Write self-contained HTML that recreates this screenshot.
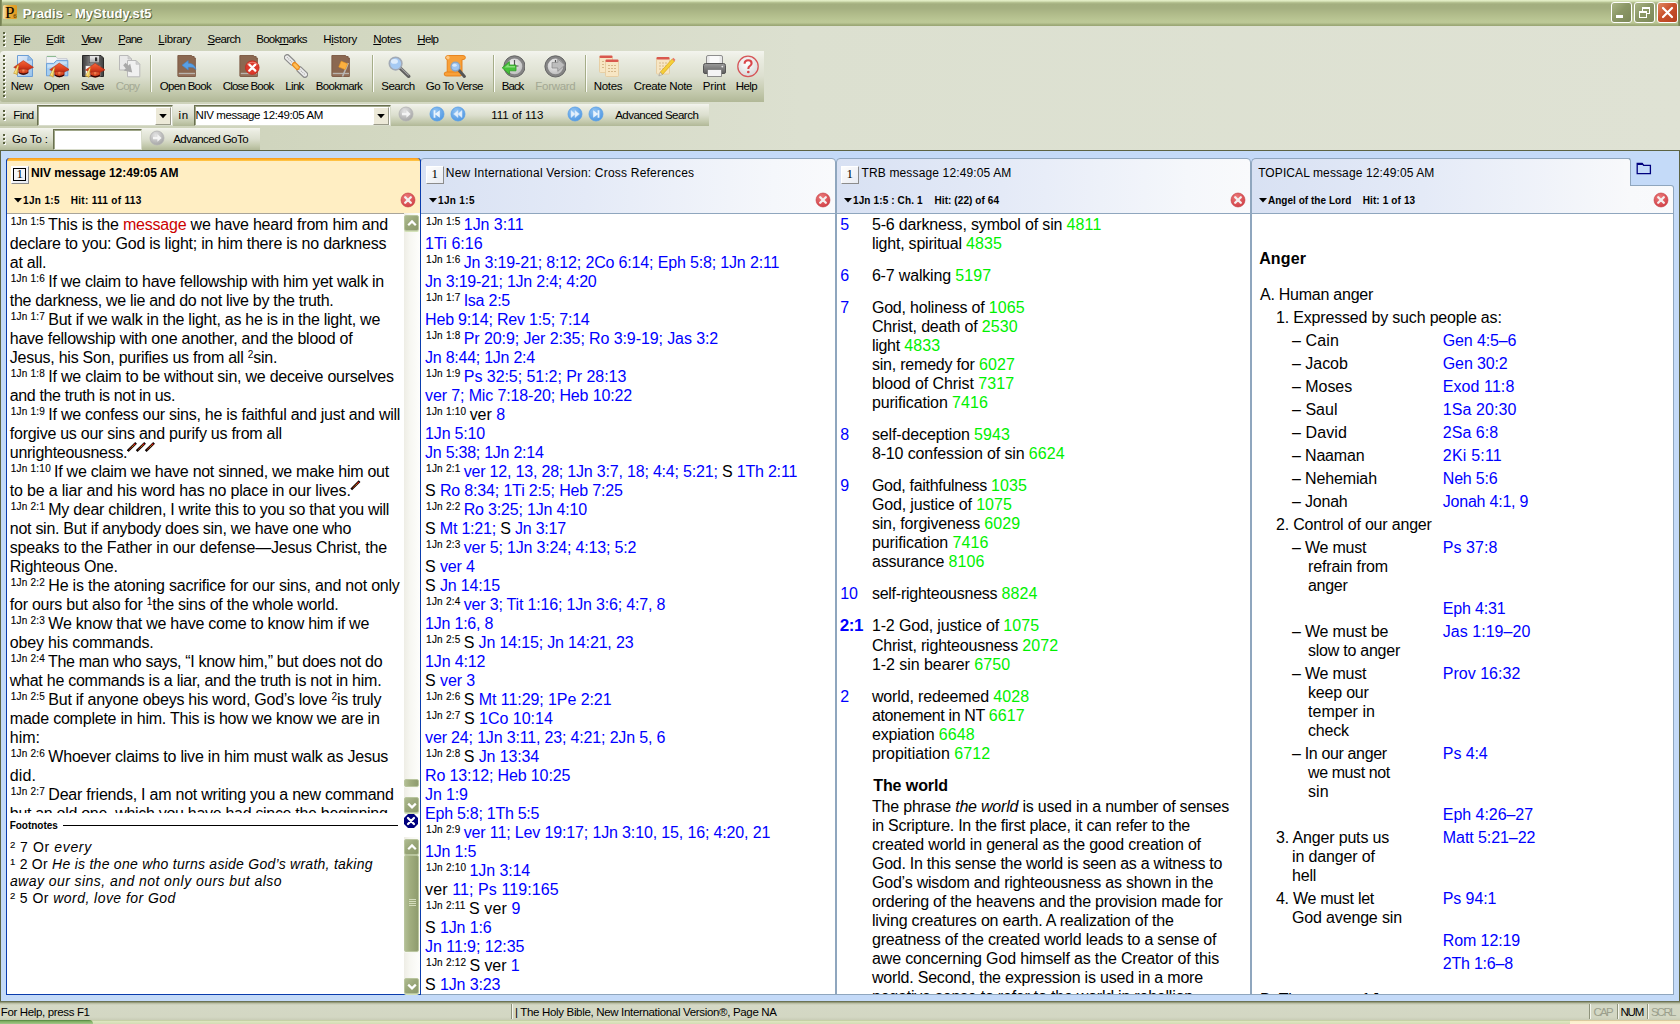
<!DOCTYPE html>
<html lang="en"><head><meta charset="utf-8"><title>Pradis - MyStudy.st5</title>
<style>
html,body{margin:0;padding:0}
body{width:1680px;height:1024px;overflow:hidden;position:relative;background:#dde1d1;font-family:"Liberation Sans",sans-serif;font-size:11px;color:#000}
div,span,svg{box-sizing:border-box}
.abs{position:absolute}
/* title bar */
#title{position:absolute;left:0;top:0;width:1680px;height:26px;
 background:linear-gradient(to bottom,#e6f0ca 0,#dbe7bd 1px,#b6c292 2.5px,#a3ae7f 4px,#a4af80 8px,#b0bb8a 14px,#bcc896 21px,#bbc795 23px,#a9b583 24px,#98a472 26px)}
#title .edgeL{position:absolute;left:0;top:0;width:2px;height:26px;background:linear-gradient(to right,#6f7a4d,#8e9a69)}
#title .edgeR{position:absolute;right:0;top:0;width:2px;height:26px;background:linear-gradient(to left,#6f7a4d,#8e9a69)}
.wbtn{position:absolute;top:2px;width:21px;height:21px;border:1px solid #fff;border-radius:3px;
 background:linear-gradient(135deg,#aab586 0,#8b9766 45%,#7c8858 100%)}
.wbtn.close{background:linear-gradient(135deg,#e08a62 0,#c9512c 45%,#b5401f 100%)}
/* dock area */
#dock{position:absolute;left:0;top:26px;width:1680px;height:124px;
 background:linear-gradient(to right,#cacfb6 0,#d3d8c2 400px,#dce0d0 800px,#dfe2d4 1680px)}
.tb{position:absolute;
 background:linear-gradient(to bottom,#f3f4ee 0,#eaece1 15%,#dcdfcf 50%,#c4caae 80%,#b1b897 100%)}
.grip{position:absolute;left:3px;width:2px;background:
 repeating-linear-gradient(to bottom,#59613e 0,#59613e 2px,transparent 2px,transparent 4px)}
.gripw{position:absolute;left:4px;width:2px;background:
 repeating-linear-gradient(to bottom,#fdfdfb 0,#fdfdfb 2px,transparent 2px,transparent 4px)}
.sep{position:absolute;width:2px;background:linear-gradient(to right,#a5ad88 0,#a5ad88 1px,#fbfcf8 1px,#fbfcf8 2px)}
.inp{position:absolute;background:#fff;border:1px solid;border-color:#6a7050 #d8dccb #d8dccb #6a7050;box-shadow:inset 1px 1px 0 #a0a78a}
.ddb{position:absolute;background:#ece9d8;border:1px solid;border-color:#fff #9a9a8a #9a9a8a #fff}
/* workspace */
#work{position:absolute;left:0;top:150px;width:1680px;height:852px;background:#c4daf8;border:1px solid #5c6343;border-bottom:0}
.pane{position:absolute;background:#fff;overflow:hidden}
.txt{position:absolute;white-space:pre;font-size:16px;line-height:19px;height:19px;letter-spacing:-0.2px;word-spacing:0;color:#000}
.v{font-size:10px;letter-spacing:0.22px;word-spacing:0;position:relative;top:-5px;left:1px;color:#000;-webkit-text-stroke:0.12px #000}
.b{color:#0000ff}
.g{color:#00f000}
.gx{letter-spacing:0.1px}
.r{color:#cc0000}
.k{color:#000}
.sup{font-size:10px;position:relative;top:-5px;letter-spacing:0}
/* scrollbar bits */
.sbtrack{position:absolute;width:16px;background:linear-gradient(to right,#eeede5 0,#f7f7f2 40%,#fefefc 100%)}
.sbbtn{position:absolute;width:15px;height:16px;border:1px solid #b9c59e;border-radius:2px;
 background:linear-gradient(135deg,#aebb90 0,#9aa77a 45%,#8b996a 100%);box-shadow:0 1px 0 0 #d3e2b8}
.sbthumb{position:absolute;width:15px;border:1px solid #b9c59e;border-radius:2px;
 background:linear-gradient(to right,#b2be94 0,#a0ad7e 40%,#8f9c6e 100%);box-shadow:0 1px 0 0 #f6f7f1}
/* status */
#status{position:absolute;left:0;top:1001px;width:1680px;height:19px;
 background:linear-gradient(to bottom,#5b6244 0,#7d8465 1px,#adb296 2px,#c9cdb7 3px,#d4d8c5 4.5px,#d3d7c3 16px,#c8ccb6 19px)}
#task{position:absolute;left:0;top:1020px;width:1680px;height:4px;background:linear-gradient(to bottom,#aebb8a 0,#dfe7c2 1px,#d3dcb3 4px)}
.fn{position:absolute;white-space:pre;font-size:14px;line-height:17px;height:17px;letter-spacing:-0.1px;color:#000}
.fs{font-size:9.5px;position:relative;top:-4px;letter-spacing:0.3px;-webkit-text-stroke:0.12px #000}

</style></head>
<body>
<div id="title"><div class="edgeL"></div><div class="edgeR"></div>
<svg class="abs" style="left:3px;top:5px" width="14" height="14" viewBox="0 0 14 14"><defs><linearGradient id="gp6" x1="0" y1="0" x2="1" y2="0"><stop offset="0" stop-color="#f8e3b0"/><stop offset=".35" stop-color="#e7ae3c"/><stop offset="1" stop-color="#e09a22"/></linearGradient></defs><rect x="0" y="0" width="14" height="14" rx="1.5" fill="url(#gp6)"/><text x="2.0" y="12.8" font-family="Liberation Serif" font-size="17" fill="#0c0600">P</text><text x="10.2" y="13.2" font-family="Liberation Serif" font-size="6.5" fill="#3a2a08">6</text></svg>
<span style="position:absolute;left:22.73px;top:5.10px;font:normal bold 13px 'Liberation Sans';line-height:17px;letter-spacing:0.101px;color:#fff;white-space:pre;text-shadow:1px 1px 0 #5d673f,1px 0 0 rgba(93,103,63,.55)">Pradis - MyStudy.st5</span>
<div class="wbtn" style="left:1611px"><div class="abs" style="left:4px;top:12px;width:7px;height:3px;background:#fff"></div></div>
<div class="wbtn" style="left:1634px"><div class="abs" style="left:7px;top:4px;width:8px;height:7px;border:1px solid #fff;border-top-width:2px"></div><div class="abs" style="left:4px;top:8px;width:8px;height:7px;border:1px solid #fff;border-top-width:2px;background:#8a9665"></div></div>
<div class="wbtn close" style="left:1657px"><svg class="abs" style="left:0px;top:0px" width="19" height="19" viewBox="0 0 19 19"><path d="M5 5 L14 14 M14 5 L5 14" stroke="#fff" stroke-width="2.2" stroke-linecap="round"/></svg></div>
</div>
<div id="dock"></div>
<div class="gripw" style="top:33px;height:14px"></div><div class="grip" style="top:32px;height:14px"></div>
<span style="position:absolute;left:13.86px;top:31.52px;font:normal normal 11.5px 'Liberation Sans';line-height:15px;letter-spacing:-0.559px;color:#000;white-space:pre;"><u>F</u>ile</span>
<span style="position:absolute;left:46.16px;top:31.52px;font:normal normal 11.5px 'Liberation Sans';line-height:15px;letter-spacing:-0.400px;color:#000;white-space:pre;"><u>E</u>dit</span>
<span style="position:absolute;left:81.45px;top:31.52px;font:normal normal 11.5px 'Liberation Sans';line-height:15px;letter-spacing:-1.332px;color:#000;white-space:pre;"><u>V</u>iew</span>
<span style="position:absolute;left:118.26px;top:31.52px;font:normal normal 11.5px 'Liberation Sans';line-height:15px;letter-spacing:-0.802px;color:#000;white-space:pre;"><u>P</u>ane</span>
<span style="position:absolute;left:158.36px;top:31.52px;font:normal normal 11.5px 'Liberation Sans';line-height:15px;letter-spacing:-0.332px;color:#000;white-space:pre;"><u>L</u>ibrary</span>
<span style="position:absolute;left:207.58px;top:31.52px;font:normal normal 11.5px 'Liberation Sans';line-height:15px;letter-spacing:-0.614px;color:#000;white-space:pre;"><u>S</u>earch</span>
<span style="position:absolute;left:256.26px;top:31.52px;font:normal normal 11.5px 'Liberation Sans';line-height:15px;letter-spacing:-0.772px;color:#000;white-space:pre;">Book<u>m</u>arks</span>
<span style="position:absolute;left:323.26px;top:31.52px;font:normal normal 11.5px 'Liberation Sans';line-height:15px;letter-spacing:-0.319px;color:#000;white-space:pre;">H<u>i</u>story</span>
<span style="position:absolute;left:373.26px;top:31.52px;font:normal normal 11.5px 'Liberation Sans';line-height:15px;letter-spacing:-0.447px;color:#000;white-space:pre;"><u>N</u>otes</span>
<span style="position:absolute;left:417.26px;top:31.52px;font:normal normal 11.5px 'Liberation Sans';line-height:15px;letter-spacing:-0.643px;color:#000;white-space:pre;"><u>H</u>elp</span>
<div class="tb" style="left:0;top:51px;width:764px;height:51px;border-radius:4px 0 0 3px"></div>
<div class="gripw" style="top:56px;height:42px"></div><div class="grip" style="top:55px;height:42px"></div>
<svg class="abs" style="left:12px;top:54px" width="24" height="24" viewBox="0 0 24 24"><defs><linearGradient id="gdoc" x1="0" y1="0" x2="1" y2="1"><stop offset="0" stop-color="#e6edf8"/><stop offset=".5" stop-color="#c2daf3"/><stop offset="1" stop-color="#93c0ea"/></linearGradient></defs><path d="M5.5 1.5 H16.2 L20.5 5.8 V22.5 H5.5 Z" fill="url(#gdoc)" stroke="#6c9ed6"/><path d="M16.2 1.5 L15.6 6.4 L20.5 5.8 Z" fill="#9cc0e6" stroke="#6c9ed6" stroke-width=".6"/><g transform="translate(1.3 6.6) scale(1)"><defs><linearGradient id="gcapR" x1="0" y1="0" x2="0" y2="1"><stop offset="0" stop-color="#f4683a"/><stop offset=".6" stop-color="#dd4220"/><stop offset="1" stop-color="#b62a14"/></linearGradient><radialGradient id="gcapS" cx=".5" cy=".3" r=".65"><stop offset="0" stop-color="#f58a56"/><stop offset=".6" stop-color="#d8441f"/><stop offset="1" stop-color="#ae2610"/></radialGradient></defs><path d="M5.4 8 L5.4 12.2 Q10 15.8 14.9 12.2 L14.9 8 Z" fill="url(#gcapS)" stroke="#9a200c" stroke-width=".5"/><path d="M5.5 11.6 Q10 14.4 14.8 11.6 L14.8 12.5 Q10 16 5.5 12.5Z" fill="#240403"/><path d="M8.3 9 V12.6 M11.8 9 V12.8" stroke="#a8260f" stroke-width=".6" opacity=".7"/><path d="M10 0 L20.2 6.7 L15 9.1 Q10 7.2 5.2 9.1 L0.4 6.7 Z" fill="url(#gcapR)" stroke="#a82612" stroke-width=".5"/><path d="M4.8 4.2 L0.4 12.8 L1.8 12.9 L3.9 14.2 L5.3 4.5 Z" fill="#f1d25a" stroke="#c48a18" stroke-width=".55"/><path d="M4.7 5.5 L1.6 12.4" stroke="#fbeeb0" stroke-width=".7"/></g></svg>
<span style="position:absolute;left:10.86px;top:78.92px;font:normal normal 11.5px 'Liberation Sans';line-height:15px;letter-spacing:-0.550px;color:#000;white-space:pre;">New</span>
<svg class="abs" style="left:45px;top:54px" width="24" height="24" viewBox="0 0 24 24"><path d="M1.5 21 V2.6 H11 L12.6 4.6 H22 V8" fill="#f3f4f6" stroke="#c9ccd2"/><path d="M2 2.4 H11" stroke="#86b88a" stroke-width="1"/><path d="M1.5 21.8 V9.4 H8.6 L11.6 6.4 H22.8 V21.8 Z" fill="#a5cdf0" stroke="#6ea2da"/><path d="M2.4 10.4 H9 L12 7.4 H21.8 V10 L2.4 14Z" fill="#cfe5f8" opacity=".8"/><g transform="translate(4.3 9) scale(1)"><defs><linearGradient id="gcapR" x1="0" y1="0" x2="0" y2="1"><stop offset="0" stop-color="#f4683a"/><stop offset=".6" stop-color="#dd4220"/><stop offset="1" stop-color="#b62a14"/></linearGradient><radialGradient id="gcapS" cx=".5" cy=".3" r=".65"><stop offset="0" stop-color="#f58a56"/><stop offset=".6" stop-color="#d8441f"/><stop offset="1" stop-color="#ae2610"/></radialGradient></defs><path d="M5.4 8 L5.4 12.2 Q10 15.8 14.9 12.2 L14.9 8 Z" fill="url(#gcapS)" stroke="#9a200c" stroke-width=".5"/><path d="M5.5 11.6 Q10 14.4 14.8 11.6 L14.8 12.5 Q10 16 5.5 12.5Z" fill="#240403"/><path d="M8.3 9 V12.6 M11.8 9 V12.8" stroke="#a8260f" stroke-width=".6" opacity=".7"/><path d="M10 0 L20.2 6.7 L15 9.1 Q10 7.2 5.2 9.1 L0.4 6.7 Z" fill="url(#gcapR)" stroke="#a82612" stroke-width=".5"/><path d="M4.8 4.2 L0.4 12.8 L1.8 12.9 L3.9 14.2 L5.3 4.5 Z" fill="#f1d25a" stroke="#c48a18" stroke-width=".55"/><path d="M4.7 5.5 L1.6 12.4" stroke="#fbeeb0" stroke-width=".7"/></g></svg>
<span style="position:absolute;left:43.76px;top:78.92px;font:normal normal 11.5px 'Liberation Sans';line-height:15px;letter-spacing:-0.783px;color:#000;white-space:pre;">Open</span>
<svg class="abs" style="left:81px;top:54px" width="24" height="24" viewBox="0 0 24 24"><defs><linearGradient id="gfl" x1="0" y1="0" x2="1" y2="0"><stop offset="0" stop-color="#3c3c3c"/><stop offset=".45" stop-color="#8e8e8e"/><stop offset="1" stop-color="#404040"/></linearGradient><linearGradient id="gsh" x1="0" y1="0" x2="0" y2="1"><stop offset="0" stop-color="#f4f4f4"/><stop offset="1" stop-color="#a8a8a8"/></linearGradient></defs><path d="M1.5 1.5 H20 L22.5 4 V22.5 H1.5 Z" fill="url(#gfl)" stroke="#2a2a2a"/><rect x="8.6" y="1.8" width="9.6" height="7" fill="url(#gsh)" stroke="#4a4a4a" stroke-width=".5"/><rect x="14" y="3.4" width="2.2" height="3.8" fill="#2c2c2c"/><rect x="4.4" y="11.8" width="15" height="10.6" fill="#f8f8f8" stroke="#5a5a5a" stroke-width=".5"/><g transform="translate(4.1 9.25) scale(1)"><defs><linearGradient id="gcapR" x1="0" y1="0" x2="0" y2="1"><stop offset="0" stop-color="#f4683a"/><stop offset=".6" stop-color="#dd4220"/><stop offset="1" stop-color="#b62a14"/></linearGradient><radialGradient id="gcapS" cx=".5" cy=".3" r=".65"><stop offset="0" stop-color="#f58a56"/><stop offset=".6" stop-color="#d8441f"/><stop offset="1" stop-color="#ae2610"/></radialGradient></defs><path d="M5.4 8 L5.4 12.2 Q10 15.8 14.9 12.2 L14.9 8 Z" fill="url(#gcapS)" stroke="#9a200c" stroke-width=".5"/><path d="M5.5 11.6 Q10 14.4 14.8 11.6 L14.8 12.5 Q10 16 5.5 12.5Z" fill="#240403"/><path d="M8.3 9 V12.6 M11.8 9 V12.8" stroke="#a8260f" stroke-width=".6" opacity=".7"/><path d="M10 0 L20.2 6.7 L15 9.1 Q10 7.2 5.2 9.1 L0.4 6.7 Z" fill="url(#gcapR)" stroke="#a82612" stroke-width=".5"/><path d="M4.8 4.2 L0.4 12.8 L1.8 12.9 L3.9 14.2 L5.3 4.5 Z" fill="#f1d25a" stroke="#c48a18" stroke-width=".55"/><path d="M4.7 5.5 L1.6 12.4" stroke="#fbeeb0" stroke-width=".7"/></g></svg>
<span style="position:absolute;left:80.78px;top:78.92px;font:normal normal 11.5px 'Liberation Sans';line-height:15px;letter-spacing:-0.895px;color:#000;white-space:pre;">Save</span>
<svg class="abs" style="left:117px;top:54px" width="24" height="24" viewBox="0 0 24 24"><path d="M2.5 1.5 H11 L14.5 5 V16 H2.5 Z" fill="#e9e9e9" stroke="#b9b9b9"/><path d="M11 1.5 V5 H14.5Z" fill="#d2d2d2" stroke="#b9b9b9" stroke-width=".6"/><path d="M10.5 6.5 H19 L22.8 10.3 V22.8 H10.5 Z" fill="#f0f0f0" stroke="#b9b9b9"/><path d="M19 6.5 V10.3 H22.8Z" fill="#d2d2d2" stroke="#b9b9b9" stroke-width=".6"/><path d="M6.2 11.2 L8.6 8.8 L11.4 11.6 L13.2 9.8 L15.2 18.6 L6.6 16.6 L8.8 14.4 Z" fill="#a9a9a9"/></svg>
<span style="position:absolute;left:115.72px;top:78.92px;font:normal normal 11.5px 'Liberation Sans';line-height:15px;letter-spacing:-0.818px;color:#a3a894;white-space:pre;">Copy</span>
<svg class="abs" style="left:173px;top:54px" width="24" height="24" viewBox="0 0 24 24"><g transform="translate(3 0) scale(1.25 1)"><path d="M1.5 1.5 H12.5 V2.5 H14.5 V4 H15.5 V22.5 H2 Q1.5 22.5 1.5 22 Z" fill="#8b6851" stroke="#7a5742" stroke-width=".8"/><rect x="2.2" y="18.8" width="13" height="1.6" fill="#b9b4ae"/><rect x="2.2" y="20.4" width="13" height="1.6" fill="#94705a"/></g><path d="M9 11.2 L15.2 6.5 L15.2 9.2 Q21.5 9.2 23 15.5 Q20.5 12.6 15.2 13.2 L15.2 16 Z" fill="#58a0e6" stroke="#3f86cf" stroke-width=".6"/></svg>
<span style="position:absolute;left:159.76px;top:78.92px;font:normal normal 11.5px 'Liberation Sans';line-height:15px;letter-spacing:-0.690px;color:#000;white-space:pre;">Open Book</span>
<svg class="abs" style="left:236px;top:54px" width="24" height="24" viewBox="0 0 24 24"><g transform="translate(2 0) scale(1.25 1)"><path d="M1.5 1.5 H12.5 V2.5 H14.5 V4 H15.5 V22.5 H2 Q1.5 22.5 1.5 22 Z" fill="#8b6851" stroke="#7a5742" stroke-width=".8"/><rect x="2.2" y="18.8" width="13" height="1.6" fill="#b9b4ae"/><rect x="2.2" y="20.4" width="13" height="1.6" fill="#94705a"/></g><circle cx="16.3" cy="13.6" r="6.8" fill="#dd3a2c" stroke="#c02a1c" stroke-width=".8"/><path d="M13.3 10.6 L19.3 16.6 M19.3 10.6 L13.3 16.6" stroke="#fff" stroke-width="2.2" stroke-linecap="round"/><path d="M11 10.5 Q16.3 6 21.6 10.5" fill="none" stroke="#f59a8c" stroke-width="1.2" opacity=".7"/></svg>
<span style="position:absolute;left:222.72px;top:78.92px;font:normal normal 11.5px 'Liberation Sans';line-height:15px;letter-spacing:-0.805px;color:#000;white-space:pre;">Close Book</span>
<svg class="abs" style="left:284px;top:54px" width="24" height="24" viewBox="0 0 24 24"><g transform="rotate(44 12 12)"><rect x="-3" y="9.3" width="12.5" height="5.4" rx="2.6" fill="#ececec" stroke="#8c8c8c" stroke-width="1.2"/><rect x="14.5" y="9.3" width="12.5" height="5.4" rx="2.6" fill="#ececec" stroke="#8c8c8c" stroke-width="1.2"/><path d="M-0.5 12 H7 M17 12 H24.5" stroke="#a6a6a6" stroke-width="1" stroke-dasharray="1 1"/><rect x="8" y="10" width="8" height="4" rx="2" fill="#ffbe55" stroke="#ea8a1c" stroke-width="1.2"/></g></svg>
<span style="position:absolute;left:285.36px;top:78.92px;font:normal normal 11.5px 'Liberation Sans';line-height:15px;letter-spacing:-0.694px;color:#000;white-space:pre;">Link</span>
<svg class="abs" style="left:328px;top:54px" width="24" height="24" viewBox="0 0 24 24"><g transform="translate(2 0) scale(1.25 1)"><path d="M1.5 1.5 H12.5 V2.5 H14.5 V4 H15.5 V22.5 H2 Q1.5 22.5 1.5 22 Z" fill="#8b6851" stroke="#7a5742" stroke-width=".8"/><rect x="2.2" y="18.8" width="13" height="1.6" fill="#b9b4ae"/><rect x="2.2" y="20.4" width="13" height="1.6" fill="#94705a"/></g><path d="M20.3 9 L14.5 22.5" stroke="#b8b8b8" stroke-width="1.6"/><path d="M13.2 7.2 L19.6 9.8 L17.2 15.6 L10.8 13 Z" fill="#fbb040" stroke="#ee9a1e" stroke-width=".6"/></svg>
<span style="position:absolute;left:315.86px;top:78.92px;font:normal normal 11.5px 'Liberation Sans';line-height:15px;letter-spacing:-0.694px;color:#000;white-space:pre;">Bookmark</span>
<svg class="abs" style="left:387px;top:54px" width="24" height="24" viewBox="0 0 24 24"><path d="M13 14 L21.6 22.2" stroke="#5e5e5e" stroke-width="3.6" stroke-linecap="round"/><path d="M13.4 13.6 L21.4 21.2" stroke="#a4a4a4" stroke-width="1.1" stroke-linecap="round"/><circle cx="8.6" cy="9.6" r="6.3" fill="#a6caf3" stroke="#a2aab6" stroke-width="1.6"/><ellipse cx="7.4" cy="7.4" rx="3.5" ry="2.4" fill="#e6f1fd" opacity=".9"/></svg>
<span style="position:absolute;left:381.28px;top:78.92px;font:normal normal 11.5px 'Liberation Sans';line-height:15px;letter-spacing:-0.514px;color:#000;white-space:pre;">Search</span>
<svg class="abs" style="left:443px;top:54px" width="24" height="24" viewBox="0 0 24 24"><path d="M5.2 1.5 H20 Q22.4 1.5 22.4 3.6 Q22.4 5.6 20 5.6 H19 V18 H17 Q19 18 19 20 Q19 22 17 22 H3.4 Q1.2 22 1.2 20 Q1.2 18 3.4 18 H4.2 V5.6 Q2.6 5.4 2.6 3.6 Q2.6 1.5 5.2 1.5Z" fill="#f8a038" stroke="#e57e14" stroke-width=".9"/><path d="M5.2 1.8 Q3.2 2 3.2 3.6 Q3.2 5.2 5.2 5.4 Q6.6 5 6.6 3.6 Q6.6 2.2 5.2 1.8Z" fill="#fcc987"/><path d="M4.4 18 H17" stroke="#e57e14" stroke-width=".8"/><path d="M15.4 15.6 L21.4 22.4" stroke="#565656" stroke-width="3" stroke-linecap="round"/><circle cx="12.4" cy="12.6" r="4.4" fill="#9ec5f0" stroke="#86a4c6" stroke-width="1.3"/><ellipse cx="11.6" cy="11.2" rx="2.2" ry="1.5" fill="#e0eefc" opacity=".85"/></svg>
<span style="position:absolute;left:425.72px;top:78.92px;font:normal normal 11.5px 'Liberation Sans';line-height:15px;letter-spacing:-0.529px;color:#000;white-space:pre;">Go To Verse</span>
<svg class="abs" style="left:501px;top:54px" width="24" height="24" viewBox="0 0 24 24"><defs><radialGradient id="gck" cx=".4" cy=".35" r=".7"><stop offset="0" stop-color="#f4f4f4"/><stop offset="1" stop-color="#bdbdbd"/></radialGradient></defs><circle cx="13.5" cy="12.4" r="10.6" fill="#848484" stroke="#666" stroke-width="1"/><circle cx="13.5" cy="12.4" r="7.8" fill="url(#gck)"/><path d="M13.5 6 V12 H17.5" stroke="#555" stroke-width="1.2" fill="none"/><path d="M1.2 13.8 L8.4 7.6 L8.4 11 H15 V16.8 H8.4 V20.4 Z" fill="#46c23a" stroke="#2e9a26" stroke-width=".8"/><path d="M3.4 13.6 L7.6 10 V12 H14 V13.5Z" fill="#9be58e" opacity=".8"/></svg>
<span style="position:absolute;left:501.86px;top:78.92px;font:normal normal 11.5px 'Liberation Sans';line-height:15px;letter-spacing:-1.017px;color:#000;white-space:pre;">Back</span>
<svg class="abs" style="left:542px;top:54px" width="24" height="24" viewBox="0 0 24 24"><defs><radialGradient id="gck2" cx=".4" cy=".35" r=".7"><stop offset="0" stop-color="#f4f4f4"/><stop offset="1" stop-color="#bdbdbd"/></radialGradient></defs><circle cx="13.5" cy="12.4" r="10.6" fill="#848484" stroke="#666" stroke-width="1"/><circle cx="13.5" cy="12.4" r="7.8" fill="url(#gck2)"/><path d="M13.5 6 V12 H17.5" stroke="#555" stroke-width="1.2" fill="none"/><path d="M22.8 11 L15.8 5 L15.8 8.4 H10 V14 H15.8 V17.4 Z" fill="#bdbdbd" stroke="#8a8a8a" stroke-width=".8"/></svg>
<span style="position:absolute;left:535.36px;top:78.92px;font:normal normal 11.5px 'Liberation Sans';line-height:15px;letter-spacing:-0.300px;color:#a3a894;white-space:pre;">Forward</span>
<svg class="abs" style="left:598px;top:54px" width="24" height="24" viewBox="0 0 24 24"><g transform="translate(1 1)"><rect x="0.5" y="1.5" width="13" height="16" rx="1" fill="#f7e6c4" stroke="#e4c99a" stroke-width=".8"/><rect x="0.5" y="0.5" width="13" height="2.6" rx="1" fill="#d9584e"/><path d="M3 6.5 H11 M3 9.5 H11 M3 12.5 H11" stroke="#d6b88a" stroke-width="1" stroke-dasharray="2 1"/></g><g transform="translate(7 5)"><rect x="0.5" y="1.5" width="13" height="16" rx="1" fill="#f7e6c4" stroke="#e4c99a" stroke-width=".8"/><rect x="0.5" y="0.5" width="13" height="2.6" rx="1" fill="#d9584e"/><path d="M3 6.5 H11 M3 9.5 H11 M3 12.5 H11" stroke="#d6b88a" stroke-width="1" stroke-dasharray="2 1"/></g></svg>
<span style="position:absolute;left:593.86px;top:78.92px;font:normal normal 11.5px 'Liberation Sans';line-height:15px;letter-spacing:-0.372px;color:#000;white-space:pre;">Notes</span>
<svg class="abs" style="left:652px;top:54px" width="24" height="24" viewBox="0 0 24 24"><g transform="translate(4 2.5)"><rect x="0.5" y="1.5" width="13" height="16" rx="1" fill="#f7e6c4" stroke="#e4c99a" stroke-width=".8"/><rect x="0.5" y="0.5" width="13" height="2.6" rx="1" fill="#d9584e"/><path d="M3 6.5 H11 M3 9.5 H11 M3 12.5 H11" stroke="#d6b88a" stroke-width="1" stroke-dasharray="2 1"/></g><path d="M20.2 5 L22.4 7.2 L10.6 20.4 L8.2 18.2 Z" fill="#f6cf3a" stroke="#d9a514" stroke-width=".7"/><path d="M20.2 5 L21.4 3.8 L23.4 5.8 L22.4 7.2Z" fill="#e9776a"/><path d="M8.2 18.2 L10.6 20.4 L6.8 22 Z" fill="#f3e6cf" stroke="#8a8a8a" stroke-width=".5"/></svg>
<span style="position:absolute;left:633.72px;top:78.92px;font:normal normal 11.5px 'Liberation Sans';line-height:15px;letter-spacing:-0.322px;color:#000;white-space:pre;">Create Note</span>
<svg class="abs" style="left:703px;top:54px" width="24" height="24" viewBox="0 0 24 24"><defs><linearGradient id="gpr" x1="0" y1="0" x2="0" y2="1"><stop offset="0" stop-color="#9b9b9b"/><stop offset="1" stop-color="#5d5d5d"/></linearGradient></defs><path d="M5 1.5 H18 Q19.5 1.5 19.5 3 V10 H3.5 V3 Q3.5 1.5 5 1.5Z" fill="#e9e9e9" stroke="#8e8e8e"/><rect x="6.5" y="2" width="10" height="8" fill="#fafafa"/><path d="M2.5 9.5 H20.5 Q22.5 9.5 22.5 11.5 V18 Q22.5 19.5 21 19.5 H2 Q0.5 19.5 0.5 18 V11.5 Q0.5 9.5 2.5 9.5Z" fill="url(#gpr)" stroke="#555"/><rect x="4.5" y="15.5" width="14" height="7" fill="#f4f4f4" stroke="#777" stroke-width=".8"/><circle cx="19.3" cy="12.6" r=".9" fill="#e8e8e8"/></svg>
<span style="position:absolute;left:702.86px;top:78.92px;font:normal normal 11.5px 'Liberation Sans';line-height:15px;letter-spacing:-0.232px;color:#000;white-space:pre;">Print</span>
<svg class="abs" style="left:736px;top:54px" width="24" height="24" viewBox="0 0 24 24"><defs><radialGradient id="ghp" cx=".45" cy=".35" r=".75"><stop offset="0" stop-color="#fff"/><stop offset="1" stop-color="#d2d2d2"/></radialGradient></defs><circle cx="12" cy="12.4" r="10.2" fill="url(#ghp)" stroke="#d65558" stroke-width="1.25"/><path d="M8.6 9.8 Q8.6 6.2 12.2 6.2 Q15.6 6.2 15.6 9.2 Q15.6 11 13.7 12.2 Q12.3 13 12.3 15" fill="none" stroke="#d9454a" stroke-width="2.1"/><circle cx="12.3" cy="18" r="1.35" fill="#d9454a"/></svg>
<span style="position:absolute;left:735.86px;top:78.92px;font:normal normal 11.5px 'Liberation Sans';line-height:15px;letter-spacing:-0.643px;color:#000;white-space:pre;">Help</span>
<div class="sep" style="left:150px;top:55px;height:37px"></div>
<div class="sep" style="left:372px;top:55px;height:37px"></div>
<div class="sep" style="left:493px;top:55px;height:37px"></div>
<div class="sep" style="left:584.5px;top:55px;height:37px"></div>
<div class="tb" style="left:0;top:104px;width:709px;height:22px"></div>
<div class="gripw" style="top:111px;height:10px"></div><div class="grip" style="top:110px;height:10px"></div>
<span style="position:absolute;left:13.16px;top:108.12px;font:normal normal 11.5px 'Liberation Sans';line-height:15px;letter-spacing:-0.430px;color:#000;white-space:pre;">Find</span>
<div class="inp" style="left:37px;top:105px;width:136px;height:21px"></div><div class="ddb" style="left:155px;top:107px;width:16px;height:18px"></div><svg class="abs" style="left:159px;top:114px" width="8" height="5" viewBox="0 0 8 5"><path d="M0.2 0 H7.8 L4 4.2Z" fill="#000"/></svg>
<span style="position:absolute;left:178.53px;top:108.12px;font:normal normal 11.5px 'Liberation Sans';line-height:15px;letter-spacing:0.563px;color:#000;white-space:pre;">in</span>
<div class="inp" style="left:194px;top:105px;width:197px;height:21px"></div><div class="ddb" style="left:373px;top:107px;width:16px;height:18px"></div><svg class="abs" style="left:377px;top:114px" width="8" height="5" viewBox="0 0 8 5"><path d="M0.2 0 H7.8 L4 4.2Z" fill="#000"/></svg>
<span style="position:absolute;left:195.56px;top:108.12px;font:normal normal 11.5px 'Liberation Sans';line-height:15px;letter-spacing:-0.410px;color:#000;white-space:pre;">NIV message 12:49:05 AM</span>
<svg class="abs" style="left:398px;top:106.3px" width="16" height="16" viewBox="0 0 16 16"><defs><radialGradient id="gg406" cx=".4" cy=".3" r=".8"><stop offset="0" stop-color="#e4e4e4"/><stop offset="1" stop-color="#9e9e9e"/></radialGradient></defs><circle cx="8" cy="8" r="7" fill="url(#gg406)" stroke="#b4b4b4" stroke-width=".8"/><path d="M4 6.8 H8.4 V4.2 L12.6 8 L8.4 11.8 V9.2 H4Z" fill="#f4f4f4"/></svg>
<svg class="abs" style="left:429px;top:106.3px" width="16" height="16" viewBox="0 0 16 16"><defs><radialGradient id="gb437" cx=".4" cy=".3" r=".8"><stop offset="0" stop-color="#92c4f4"/><stop offset="1" stop-color="#4a93e0"/></radialGradient></defs><circle cx="8" cy="8" r="7" fill="url(#gb437)" stroke="#5a9fe6" stroke-width=".8"/><path d="M4.6 4.3 V11.7 H6.4 V8.6 L10.8 11.7 V4.3 L6.4 7.4 V4.3Z" fill="#e9f3fd"/></svg>
<svg class="abs" style="left:450px;top:106.3px" width="16" height="16" viewBox="0 0 16 16"><defs><radialGradient id="gb458" cx=".4" cy=".3" r=".8"><stop offset="0" stop-color="#92c4f4"/><stop offset="1" stop-color="#4a93e0"/></radialGradient></defs><circle cx="8" cy="8" r="7" fill="url(#gb458)" stroke="#5a9fe6" stroke-width=".8"/><path d="M8 4.4 L3.6 8 L8 11.6Z M12 4.4 L7.6 8 L12 11.6Z" fill="#e4f0fc" stroke="#cfe3f8" stroke-width=".5"/></svg>
<span style="position:absolute;left:491.22px;top:108.12px;font:normal normal 11.5px 'Liberation Sans';line-height:15px;letter-spacing:0.032px;color:#000;white-space:pre;">111 of 113</span>
<svg class="abs" style="left:567px;top:106.3px" width="16" height="16" viewBox="0 0 16 16"><defs><radialGradient id="gb575" cx=".4" cy=".3" r=".8"><stop offset="0" stop-color="#92c4f4"/><stop offset="1" stop-color="#4a93e0"/></radialGradient></defs><circle cx="8" cy="8" r="7" fill="url(#gb575)" stroke="#5a9fe6" stroke-width=".8"/><path d="M8 4.4 L12.4 8 L8 11.6Z M4 4.4 L8.4 8 L4 11.6Z" fill="#e4f0fc" stroke="#cfe3f8" stroke-width=".5"/></svg>
<svg class="abs" style="left:588px;top:106.3px" width="16" height="16" viewBox="0 0 16 16"><defs><radialGradient id="gb596" cx=".4" cy=".3" r=".8"><stop offset="0" stop-color="#92c4f4"/><stop offset="1" stop-color="#4a93e0"/></radialGradient></defs><circle cx="8" cy="8" r="7" fill="url(#gb596)" stroke="#5a9fe6" stroke-width=".8"/><path d="M11.4 4.3 V11.7 H9.6 V8.6 L5.2 11.7 V4.3 L9.6 7.4 V4.3Z" fill="#e9f3fd"/></svg>
<span style="position:absolute;left:615.18px;top:108.12px;font:normal normal 11.5px 'Liberation Sans';line-height:15px;letter-spacing:-0.509px;color:#000;white-space:pre;">Advanced Search</span>
<div class="tb" style="left:0;top:128px;width:260px;height:22px"></div>
<div class="gripw" style="top:135px;height:10px"></div><div class="grip" style="top:134px;height:10px"></div>
<span style="position:absolute;left:12.02px;top:131.92px;font:normal normal 11.5px 'Liberation Sans';line-height:15px;letter-spacing:-0.158px;color:#000;white-space:pre;">Go To :</span>
<div class="inp" style="left:53px;top:129px;width:89px;height:21px"></div>
<svg class="abs" style="left:149px;top:130.3px" width="16" height="16" viewBox="0 0 16 16"><defs><radialGradient id="gg157" cx=".4" cy=".3" r=".8"><stop offset="0" stop-color="#e4e4e4"/><stop offset="1" stop-color="#9e9e9e"/></radialGradient></defs><circle cx="8" cy="8" r="7" fill="url(#gg157)" stroke="#b4b4b4" stroke-width=".8"/><path d="M4 6.8 H8.4 V4.2 L12.6 8 L8.4 11.8 V9.2 H4Z" fill="#f4f4f4"/></svg>
<span style="position:absolute;left:173.18px;top:131.92px;font:normal normal 11.5px 'Liberation Sans';line-height:15px;letter-spacing:-0.537px;color:#000;white-space:pre;">Advanced GoTo</span>
<div id="work"></div>
<div class="abs" style="left:6px;top:158px;width:415px;height:837px;background:#fff;border:1px solid #0a3cad;border-top:0;border-radius:4px 4px 0 0"></div>
<div class="abs" style="left:6px;top:158px;width:415px;height:56px;border-radius:4px 4px 0 0;background:linear-gradient(to bottom,#fb9a1c 0,#fdb12f 1.5px,#ffc94c 3px,#ffeec3 3.5px,#ffeec3 54.6px,#a9a59a 55px,#a9a59a 56px);border-left:1px solid #0a3cad;border-right:1px solid #0a3cad"></div>
<div class="abs" style="left:11px;top:166px;width:18px;height:18px;border:1px solid;border-color:#fff #8c8c8c #8c8c8c #fff;background:linear-gradient(135deg,#fdfdfd,#e9ecf3)"></div><div class="abs" style="left:13px;top:168px;width:13px;height:13px;border:1px solid #000"></div><span class="abs" style="left:16.4px;top:165.5px;font:13px 'Liberation Serif',serif;line-height:15px;color:#000">1</span>
<span style="position:absolute;left:31.00px;top:164.84px;font:normal bold 12px 'Liberation Sans';line-height:16px;letter-spacing:-0.011px;color:#000;white-space:pre;">NIV message 12:49:05 AM</span>
<svg class="abs" style="left:13.5px;top:198px" width="8" height="5" viewBox="0 0 8 5"><path d="M0 0 H8 L4 4.6Z" fill="#000"/></svg>
<span style="position:absolute;left:22.97px;top:194.03px;font:normal bold 10px 'Liberation Sans';line-height:13px;letter-spacing:0.357px;color:#000;white-space:pre;">1Jn 1:5</span>
<span style="position:absolute;left:70.73px;top:194.03px;font:normal bold 10px 'Liberation Sans';line-height:13px;letter-spacing:0.312px;color:#000;white-space:pre;">Hit: 111 of 113</span>
<svg class="abs" style="left:400px;top:192px" width="16" height="16" viewBox="0 0 16 16"><defs><radialGradient id="grx408" cx=".4" cy=".3" r=".8"><stop offset="0" stop-color="#ec7b7b"/><stop offset="1" stop-color="#cf3a42"/></radialGradient></defs><circle cx="8" cy="8" r="7" fill="url(#grx408)" stroke="#c23a40" stroke-width=".6"/><path d="M5.2 5.2 L10.8 10.8 M10.8 5.2 L5.2 10.8" stroke="#f4f0f0" stroke-width="2.3" stroke-linecap="round"/></svg>
<div class="pane" style="left:7px;top:214px;width:397px;height:599px">
<div class="txt " style="left:2.8px;top:1px;letter-spacing:-0.212px;word-spacing:0;"><span class="v">1Jn 1:5</span> This is the <span class="r">message</span> we have heard from him and</div>
<div class="txt " style="left:2.8px;top:20px;letter-spacing:-0.230px;word-spacing:0;">declare to you: God is light; in him there is no darkness</div>
<div class="txt " style="left:2.8px;top:39px;letter-spacing:-0.265px;word-spacing:0;">at all.</div>
<div class="txt " style="left:2.8px;top:58px;letter-spacing:-0.271px;word-spacing:0;"><span class="v">1Jn 1:6</span> If we claim to have fellowship with him yet walk in</div>
<div class="txt " style="left:2.8px;top:77px;letter-spacing:-0.306px;word-spacing:0;">the darkness, we lie and do not live by the truth.</div>
<div class="txt " style="left:2.8px;top:96px;letter-spacing:-0.264px;word-spacing:0;"><span class="v">1Jn 1:7</span> But if we walk in the light, as he is in the light, we</div>
<div class="txt " style="left:2.8px;top:115px;letter-spacing:-0.246px;word-spacing:0;">have fellowship with one another, and the blood of</div>
<div class="txt " style="left:2.8px;top:134px;letter-spacing:-0.253px;word-spacing:0;">Jesus, his Son, purifies us from all <span class="sup">2</span>sin.</div>
<div class="txt " style="left:2.8px;top:153px;letter-spacing:-0.238px;word-spacing:0;"><span class="v">1Jn 1:8</span> If we claim to be without sin, we deceive ourselves</div>
<div class="txt " style="left:2.8px;top:172px;letter-spacing:-0.368px;word-spacing:0;">and the truth is not in us.</div>
<div class="txt " style="left:2.8px;top:191px;letter-spacing:-0.261px;word-spacing:0;"><span class="v">1Jn 1:9</span> If we confess our sins, he is faithful and just and will</div>
<div class="txt " style="left:2.8px;top:210px;letter-spacing:-0.257px;word-spacing:0;">forgive us our sins and purify us from all</div>
<div class="txt " style="left:2.8px;top:229px;letter-spacing:-0.273px;word-spacing:0;">unrighteousness.</div>
<div class="txt " style="left:2.8px;top:248px;letter-spacing:-0.276px;word-spacing:0;"><span class="v">1Jn 1:10</span> If we claim we have not sinned, we make him out</div>
<div class="txt " style="left:2.8px;top:267px;letter-spacing:-0.184px;word-spacing:0;">to be a liar and his word has no place in our lives.</div>
<div class="txt " style="left:2.8px;top:286px;letter-spacing:-0.293px;word-spacing:0;"><span class="v">1Jn 2:1</span> My dear children, I write this to you so that you will</div>
<div class="txt " style="left:2.8px;top:305px;letter-spacing:-0.277px;word-spacing:0;">not sin. But if anybody does sin, we have one who</div>
<div class="txt " style="left:2.8px;top:324px;letter-spacing:-0.182px;word-spacing:0;">speaks to the Father in our defense—Jesus Christ, the</div>
<div class="txt " style="left:2.8px;top:343px;letter-spacing:-0.233px;word-spacing:0;">Righteous One.</div>
<div class="txt " style="left:2.8px;top:362px;letter-spacing:-0.215px;word-spacing:0;"><span class="v">1Jn 2:2</span> He is the atoning sacrifice for our sins, and not only</div>
<div class="txt " style="left:2.8px;top:381px;letter-spacing:-0.243px;word-spacing:0;">for ours but also for <span class="sup">1</span>the sins of the whole world.</div>
<div class="txt " style="left:2.8px;top:400px;letter-spacing:-0.249px;word-spacing:0;"><span class="v">1Jn 2:3</span> We know that we have come to know him if we</div>
<div class="txt " style="left:2.8px;top:419px;letter-spacing:-0.163px;word-spacing:0;">obey his commands.</div>
<div class="txt " style="left:2.8px;top:438px;letter-spacing:-0.324px;word-spacing:0;"><span class="v">1Jn 2:4</span> The man who says, “I know him,” but does not do</div>
<div class="txt " style="left:2.8px;top:457px;letter-spacing:-0.258px;word-spacing:0;">what he commands is a liar, and the truth is not in him.</div>
<div class="txt " style="left:2.8px;top:476px;letter-spacing:-0.248px;word-spacing:0;"><span class="v">1Jn 2:5</span> But if anyone obeys his word, God’s love <span class="sup">2</span>is truly</div>
<div class="txt " style="left:2.8px;top:495px;letter-spacing:-0.223px;word-spacing:0;">made complete in him. This is how we know we are in</div>
<div class="txt " style="left:2.8px;top:514px;letter-spacing:-0.058px;word-spacing:0;">him:</div>
<div class="txt " style="left:2.8px;top:533px;letter-spacing:-0.220px;word-spacing:0;"><span class="v">1Jn 2:6</span> Whoever claims to live in him must walk as Jesus</div>
<div class="txt " style="left:2.8px;top:552px;letter-spacing:0.155px;word-spacing:0;">did.</div>
<div class="txt " style="left:2.8px;top:571px;letter-spacing:-0.235px;word-spacing:0;"><span class="v">1Jn 2:7</span> Dear friends, I am not writing you a new command</div>
<div class="txt " style="left:2.8px;top:590px;letter-spacing:-0.303px;word-spacing:0;">but an old one, which you have had since the beginning.</div>
<svg class="abs" style="left:120px;top:226px" width="32" height="14" viewBox="0 0 32 14"><path d="M1.6 10.2 l6.6 -6.5" stroke="#0e0503" stroke-width="2.5" stroke-linecap="square"/><path d="M2.2 9.6 l3 -2.9" stroke="#c8380c" stroke-width="0.9"/><path d="M5.0 6.8999999999999995 l1.8 -1.75" stroke="#f08a1c" stroke-width="0.9"/><path d="M6.800000000000001 5.1499999999999995 l1.4 -1.4" stroke="#ee1c10" stroke-width="1.1"/><path d="M10.6 10.2 l6.6 -6.5" stroke="#0e0503" stroke-width="2.5" stroke-linecap="square"/><path d="M11.2 9.6 l3 -2.9" stroke="#c8380c" stroke-width="0.9"/><path d="M14.0 6.8999999999999995 l1.8 -1.75" stroke="#f08a1c" stroke-width="0.9"/><path d="M15.8 5.1499999999999995 l1.4 -1.4" stroke="#ee1c10" stroke-width="1.1"/><path d="M19.6 10.2 l6.6 -6.5" stroke="#0e0503" stroke-width="2.5" stroke-linecap="square"/><path d="M20.200000000000003 9.6 l3 -2.9" stroke="#c8380c" stroke-width="0.9"/><path d="M23.0 6.8999999999999995 l1.8 -1.75" stroke="#f08a1c" stroke-width="0.9"/><path d="M24.8 5.1499999999999995 l1.4 -1.4" stroke="#ee1c10" stroke-width="1.1"/></svg>
<svg class="abs" style="left:341px;top:265px" width="14" height="14" viewBox="0 0 14 14"><path d="M4.1 9.6 l6.6 -6.5" stroke="#0e0503" stroke-width="2.5" stroke-linecap="square"/><path d="M4.699999999999999 9.0 l3 -2.9" stroke="#c8380c" stroke-width="0.9"/><path d="M7.5 6.3 l1.8 -1.75" stroke="#f08a1c" stroke-width="0.9"/><path d="M9.3 4.55 l1.4 -1.4" stroke="#ee1c10" stroke-width="1.1"/></svg>
</div>
<div class="sbtrack" style="left:404px;top:213px;height:600px"></div>
<div class="sbbtn" style="left:404px;top:214.5px"><svg class="abs" style="left:-0.5px;top:0px" width="14" height="14" viewBox="0 0 14 14"><path d="M3.2 9.2 L7 5.4 L10.8 9.2" fill="none" stroke="#fff" stroke-width="2.2"/></svg></div>
<div class="sbthumb" style="left:404px;top:778.5px;height:8px"></div>
<div class="sbbtn" style="left:404px;top:796.5px"><svg class="abs" style="left:-0.5px;top:0px" width="14" height="14" viewBox="0 0 14 14"><path d="M3.2 5.6 L7 9.4 L10.8 5.6" fill="none" stroke="#fff" stroke-width="2.2"/></svg></div>
<span style="position:absolute;left:9.63px;top:819.03px;font:normal bold 10px 'Liberation Sans';line-height:13px;letter-spacing:-0.006px;color:#000;white-space:pre;">Footnotes</span>
<div class="abs" style="left:63px;top:825px;width:335px;height:1px;background:#000"></div>
<svg class="abs" style="left:403px;top:813px" width="16" height="16" viewBox="0 0 16 16"><path d="M5 1 H11 L15 5 V11 L11 15 H5 L1 11 V5Z" fill="#00007e"/><path d="M5 5 L11 11 M11 5 L5 11" stroke="#fff" stroke-width="2.2" stroke-linecap="round"/></svg>
<div class="fn " style="left:9.9px;top:838.65px;letter-spacing:0.643px;word-spacing:0;"><span class="fs">2</span> 7 Or <i>every</i></div>
<div class="fn " style="left:9.9px;top:855.65px;letter-spacing:0.262px;word-spacing:0;"><span class="fs">1</span> 2 Or <i>He is the one who turns aside God’s wrath, taking</i></div>
<div class="fn " style="left:9.9px;top:872.65px;letter-spacing:0.446px;word-spacing:0;"><i>away our sins, and not only ours but also</i></div>
<div class="fn " style="left:9.9px;top:889.65px;letter-spacing:0.457px;word-spacing:0;"><span class="fs">2</span> 5 Or <i>word, love for God</i></div>
<div class="sbtrack" style="left:404px;top:837px;height:157px"></div>
<div class="sbbtn" style="left:404px;top:838.5px"><svg class="abs" style="left:-0.5px;top:0px" width="14" height="14" viewBox="0 0 14 14"><path d="M3.2 9.2 L7 5.4 L10.8 9.2" fill="none" stroke="#fff" stroke-width="2.2"/></svg></div>
<div class="sbthumb" style="left:404px;top:855px;height:97px"><div class="abs" style="left:3.5px;top:43px;width:7px;height:8px;background:repeating-linear-gradient(to bottom,#d4dcbc 0,#d4dcbc 1px,transparent 1px,transparent 2px)"></div></div>
<div class="sbbtn" style="left:404px;top:978px"><svg class="abs" style="left:-0.5px;top:0px" width="14" height="14" viewBox="0 0 14 14"><path d="M3.2 5.6 L7 9.4 L10.8 5.6" fill="none" stroke="#fff" stroke-width="2.2"/></svg></div>
<div class="abs" style="left:420px;top:213px;width:416px;height:782px;background:#fff;border:1px solid #8fa6be;border-top-color:#9fb0c4"></div>
<div class="abs" style="left:420px;top:158px;width:416px;height:56px;border:1px solid #8fa6be;border-radius:4px 4px 0 0;background:linear-gradient(to right,#d8e1f3 0,#e4eaf7 40%,#f5f7fb 85%,#f9fafc 100%)"></div>
<div class="abs" style="left:420px;top:160px;width:1px;height:835px;background:#0a3cad"></div>
<div class="abs" style="left:426px;top:166px;width:18px;height:18px;border:1px solid;border-color:#fff #8c8c8c #8c8c8c #fff;background:linear-gradient(135deg,#fdfdfd,#e9ecf3)"></div><span class="abs" style="left:431.6px;top:165.5px;font:13px 'Liberation Serif',serif;line-height:15px;color:#000">1</span>
<span style="position:absolute;left:445.82px;top:164.84px;font:normal normal 12px 'Liberation Sans';line-height:16px;letter-spacing:0.209px;color:#000;white-space:pre;">New International Version: Cross References</span>
<svg class="abs" style="left:428.5px;top:198px" width="8" height="5" viewBox="0 0 8 5"><path d="M0 0 H8 L4 4.6Z" fill="#000"/></svg>
<span style="position:absolute;left:438.07px;top:194.03px;font:normal bold 10px 'Liberation Sans';line-height:13px;letter-spacing:0.323px;color:#000;white-space:pre;">1Jn 1:5</span>
<svg class="abs" style="left:815px;top:192px" width="16" height="16" viewBox="0 0 16 16"><defs><radialGradient id="grx823" cx=".4" cy=".3" r=".8"><stop offset="0" stop-color="#ec7b7b"/><stop offset="1" stop-color="#cf3a42"/></radialGradient></defs><circle cx="8" cy="8" r="7" fill="url(#grx823)" stroke="#c23a40" stroke-width=".6"/><path d="M5.2 5.2 L10.8 10.8 M10.8 5.2 L5.2 10.8" stroke="#f4f0f0" stroke-width="2.3" stroke-linecap="round"/></svg>
<div class="pane" style="left:421px;top:214px;width:414px;height:780px">
<div class="txt b" style="left:4.1px;top:1px;letter-spacing:-0.063px;word-spacing:0;"><span class="v">1Jn 1:5</span> 1Jn 3:11</div>
<div class="txt b" style="left:4.1px;top:20px;letter-spacing:0.055px;word-spacing:0;">1Ti 6:16</div>
<div class="txt b" style="left:4.1px;top:39px;letter-spacing:-0.158px;word-spacing:0;"><span class="v">1Jn 1:6</span> Jn 3:19-21; 8:12; 2Co 6:14; Eph 5:8; 1Jn 2:11</div>
<div class="txt b" style="left:4.1px;top:58px;letter-spacing:-0.225px;word-spacing:0;">Jn 3:19-21; 1Jn 2:4; 4:20</div>
<div class="txt b" style="left:4.1px;top:77px;letter-spacing:-0.237px;word-spacing:0;"><span class="v">1Jn 1:7</span> Isa 2:5</div>
<div class="txt b" style="left:4.1px;top:96px;letter-spacing:-0.197px;word-spacing:0;">Heb 9:14; Rev 1:5; 7:14</div>
<div class="txt b" style="left:4.1px;top:115px;letter-spacing:-0.098px;word-spacing:0;"><span class="v">1Jn 1:8</span> Pr 20:9; Jer 2:35; Ro 3:9-19; Jas 3:2</div>
<div class="txt b" style="left:4.1px;top:134px;letter-spacing:-0.253px;word-spacing:0;">Jn 8:44; 1Jn 2:4</div>
<div class="txt b" style="left:4.1px;top:153px;letter-spacing:-0.054px;word-spacing:0;"><span class="v">1Jn 1:9</span> Ps 32:5; 51:2; Pr 28:13</div>
<div class="txt b" style="left:4.1px;top:172px;letter-spacing:-0.131px;word-spacing:0;">ver 7; Mic 7:18-20; Heb 10:22</div>
<div class="txt b" style="left:4.1px;top:191px;letter-spacing:-0.032px;word-spacing:0;"><span class="v">1Jn 1:10</span> <span class="k">ver</span> 8</div>
<div class="txt b" style="left:4.1px;top:210px;letter-spacing:-0.181px;word-spacing:0;">1Jn 5:10</div>
<div class="txt b" style="left:4.1px;top:229px;letter-spacing:-0.250px;word-spacing:0;">Jn 5:38; 1Jn 2:14</div>
<div class="txt b" style="left:4.1px;top:248px;letter-spacing:-0.193px;word-spacing:0;"><span class="v">1Jn 2:1</span> ver 12, 13, 28; 1Jn 3:7, 18; 4:4; 5:21; <span class="k">S</span> 1Th 2:11</div>
<div class="txt b" style="left:4.1px;top:267px;letter-spacing:-0.160px;word-spacing:0;"><span class="k">S</span> Ro 8:34; 1Ti 2:5; Heb 7:25</div>
<div class="txt b" style="left:4.1px;top:286px;letter-spacing:-0.176px;word-spacing:0;"><span class="v">1Jn 2:2</span> Ro 3:25; 1Jn 4:10</div>
<div class="txt b" style="left:4.1px;top:305px;letter-spacing:-0.204px;word-spacing:0;"><span class="k">S</span> Mt 1:21; <span class="k">S</span> Jn 3:17</div>
<div class="txt b" style="left:4.1px;top:324px;letter-spacing:-0.173px;word-spacing:0;"><span class="v">1Jn 2:3</span> ver 5; 1Jn 3:24; 4:13; 5:2</div>
<div class="txt b" style="left:4.1px;top:343px;letter-spacing:-0.136px;word-spacing:0;"><span class="k">S</span> ver 4</div>
<div class="txt b" style="left:4.1px;top:362px;letter-spacing:-0.148px;word-spacing:0;"><span class="k">S</span> Jn 14:15</div>
<div class="txt b" style="left:4.1px;top:381px;letter-spacing:-0.179px;word-spacing:0;"><span class="v">1Jn 2:4</span> ver 3; Tit 1:16; 1Jn 3:6; 4:7, 8</div>
<div class="txt b" style="left:4.1px;top:400px;letter-spacing:-0.221px;word-spacing:0;">1Jn 1:6, 8</div>
<div class="txt b" style="left:4.1px;top:419px;letter-spacing:-0.157px;word-spacing:0;"><span class="v">1Jn 2:5</span> <span class="k">S</span> Jn 14:15; Jn 14:21, 23</div>
<div class="txt b" style="left:4.1px;top:438px;letter-spacing:-0.169px;word-spacing:0;">1Jn 4:12</div>
<div class="txt b" style="left:4.1px;top:457px;letter-spacing:-0.097px;word-spacing:0;"><span class="k">S</span> ver 3</div>
<div class="txt b" style="left:4.1px;top:476px;letter-spacing:-0.073px;word-spacing:0;"><span class="v">1Jn 2:6</span> <span class="k">S</span> Mt 11:29; 1Pe 2:21</div>
<div class="txt b" style="left:4.1px;top:495px;letter-spacing:-0.007px;word-spacing:0;"><span class="v">1Jn 2:7</span> <span class="k">S</span> 1Co 10:14</div>
<div class="txt b" style="left:4.1px;top:514px;letter-spacing:-0.165px;word-spacing:0;">ver 24; 1Jn 3:11, 23; 4:21; 2Jn 5, 6</div>
<div class="txt b" style="left:4.1px;top:533px;letter-spacing:-0.123px;word-spacing:0;"><span class="v">1Jn 2:8</span> <span class="k">S</span> Jn 13:34</div>
<div class="txt b" style="left:4.1px;top:552px;letter-spacing:-0.133px;word-spacing:0;">Ro 13:12; Heb 10:25</div>
<div class="txt b" style="left:4.1px;top:571px;letter-spacing:-0.167px;word-spacing:0;">Jn 1:9</div>
<div class="txt b" style="left:4.1px;top:590px;letter-spacing:-0.263px;word-spacing:0;">Eph 5:8; 1Th 5:5</div>
<div class="txt b" style="left:4.1px;top:609px;letter-spacing:-0.141px;word-spacing:0;"><span class="v">1Jn 2:9</span> ver 11; Lev 19:17; 1Jn 3:10, 15, 16; 4:20, 21</div>
<div class="txt b" style="left:4.1px;top:628px;letter-spacing:-0.185px;word-spacing:0;">1Jn 1:5</div>
<div class="txt b" style="left:4.1px;top:647px;letter-spacing:-0.098px;word-spacing:0;"><span class="v">1Jn 2:10</span> 1Jn 3:14</div>
<div class="txt b" style="left:4.1px;top:666px;letter-spacing:0.095px;word-spacing:0;"><span class="k">ver</span> 11; Ps 119:165</div>
<div class="txt b" style="left:4.1px;top:685px;letter-spacing:0.104px;word-spacing:0;"><span class="v">1Jn 2:11</span> <span class="k">S ver</span> 9</div>
<div class="txt b" style="left:4.1px;top:704px;letter-spacing:-0.138px;word-spacing:0;"><span class="k">S</span> 1Jn 1:6</div>
<div class="txt b" style="left:4.1px;top:723px;letter-spacing:-0.066px;word-spacing:0;">Jn 11:9; 12:35</div>
<div class="txt b" style="left:4.1px;top:742px;letter-spacing:-0.112px;word-spacing:0;"><span class="v">1Jn 2:12</span> <span class="k">S ver</span> 1</div>
<div class="txt b" style="left:4.1px;top:761px;letter-spacing:-0.133px;word-spacing:0;"><span class="k">S</span> 1Jn 3:23</div>
</div>
<div class="abs" style="left:836px;top:213px;width:415px;height:782px;background:#fff;border:1px solid #8fa6be;border-top-color:#9fb0c4"></div>
<div class="abs" style="left:836px;top:158px;width:415px;height:56px;border:1px solid #8fa6be;border-radius:4px 4px 0 0;background:linear-gradient(to right,#d8e1f3 0,#e4eaf7 40%,#f5f7fb 85%,#f9fafc 100%)"></div>
<div class="abs" style="left:841px;top:166px;width:18px;height:18px;border:1px solid;border-color:#fff #8c8c8c #8c8c8c #fff;background:linear-gradient(135deg,#fdfdfd,#e9ecf3)"></div><span class="abs" style="left:846.6px;top:165.5px;font:13px 'Liberation Serif',serif;line-height:15px;color:#000">1</span>
<span style="position:absolute;left:861.53px;top:164.84px;font:normal normal 12px 'Liberation Sans';line-height:16px;letter-spacing:0.141px;color:#000;white-space:pre;">TRB message 12:49:05 AM</span>
<svg class="abs" style="left:843.5px;top:198px" width="8" height="5" viewBox="0 0 8 5"><path d="M0 0 H8 L4 4.6Z" fill="#000"/></svg>
<span style="position:absolute;left:852.97px;top:194.03px;font:normal bold 10px 'Liberation Sans';line-height:13px;letter-spacing:0.128px;color:#000;white-space:pre;">1Jn 1:5 : Ch. 1</span>
<span style="position:absolute;left:934.53px;top:194.03px;font:normal bold 10px 'Liberation Sans';line-height:13px;letter-spacing:0.084px;color:#000;white-space:pre;">Hit: (22) of 64</span>
<svg class="abs" style="left:1230px;top:192px" width="16" height="16" viewBox="0 0 16 16"><defs><radialGradient id="grx1238" cx=".4" cy=".3" r=".8"><stop offset="0" stop-color="#ec7b7b"/><stop offset="1" stop-color="#cf3a42"/></radialGradient></defs><circle cx="8" cy="8" r="7" fill="url(#grx1238)" stroke="#c23a40" stroke-width=".6"/><path d="M5.2 5.2 L10.8 10.8 M10.8 5.2 L5.2 10.8" stroke="#f4f0f0" stroke-width="2.3" stroke-linecap="round"/></svg>
<div class="pane" style="left:837px;top:214px;width:413px;height:780px">
<div class="txt b" style="left:3.2px;top:1px;">5</div>
<div class="txt " style="left:34.9px;top:1px;letter-spacing:-0.161px;word-spacing:0;">5-6 darkness, symbol of sin <span class="g gx">4811</span></div>
<div class="txt " style="left:34.9px;top:20px;letter-spacing:-0.216px;word-spacing:0;">light, spiritual <span class="g gx">4835</span></div>
<div class="txt b" style="left:3.2px;top:52px;">6</div>
<div class="txt " style="left:34.9px;top:52px;letter-spacing:-0.170px;word-spacing:0;">6-7 walking <span class="g gx">5197</span></div>
<div class="txt b" style="left:3.2px;top:84px;">7</div>
<div class="txt " style="left:34.9px;top:84px;letter-spacing:-0.188px;word-spacing:0;">God, holiness of <span class="g gx">1065</span></div>
<div class="txt " style="left:34.9px;top:103px;letter-spacing:-0.177px;word-spacing:0;">Christ, death of <span class="g gx">2530</span></div>
<div class="txt " style="left:34.9px;top:122px;letter-spacing:-0.259px;word-spacing:0;">light <span class="g gx">4833</span></div>
<div class="txt " style="left:34.9px;top:141px;letter-spacing:-0.204px;word-spacing:0;">sin, remedy for <span class="g gx">6027</span></div>
<div class="txt " style="left:34.9px;top:160px;letter-spacing:-0.080px;word-spacing:0;">blood of Christ <span class="g gx">7317</span></div>
<div class="txt " style="left:34.9px;top:179px;letter-spacing:-0.135px;word-spacing:0;">purification <span class="g gx">7416</span></div>
<div class="txt b" style="left:3.2px;top:211px;">8</div>
<div class="txt " style="left:34.9px;top:211px;letter-spacing:-0.126px;word-spacing:0;">self-deception <span class="g gx">5943</span></div>
<div class="txt " style="left:34.9px;top:230px;letter-spacing:-0.142px;word-spacing:0;">8-10 confession of sin <span class="g gx">6624</span></div>
<div class="txt b" style="left:3.2px;top:262px;">9</div>
<div class="txt " style="left:34.9px;top:262px;letter-spacing:-0.297px;word-spacing:0;">God, faithfulness <span class="g gx">1035</span></div>
<div class="txt " style="left:34.9px;top:281px;letter-spacing:-0.156px;word-spacing:0;">God, justice of <span class="g gx">1075</span></div>
<div class="txt " style="left:34.9px;top:300px;letter-spacing:-0.191px;word-spacing:0;">sin, forgiveness <span class="g gx">6029</span></div>
<div class="txt " style="left:34.9px;top:319px;letter-spacing:-0.094px;word-spacing:0;">purification <span class="g gx">7416</span></div>
<div class="txt " style="left:34.9px;top:338px;letter-spacing:-0.162px;word-spacing:0;">assurance <span class="g gx">8106</span></div>
<div class="txt b" style="left:3.2px;top:370px;">10</div>
<div class="txt " style="left:34.9px;top:370px;letter-spacing:-0.246px;word-spacing:0;">self-righteousness <span class="g gx">8824</span></div>
<div class="txt b" style="left:2.8px;top:402px;letter-spacing:-0.502px;word-spacing:0;font-size:17px;"><b>2:1</b></div>
<div class="txt " style="left:34.9px;top:402px;letter-spacing:-0.143px;word-spacing:0;">1-2 God, justice of <span class="g gx">1075</span></div>
<div class="txt " style="left:34.9px;top:422px;letter-spacing:-0.201px;word-spacing:0;">Christ, righteousness <span class="g gx">2072</span></div>
<div class="txt " style="left:34.9px;top:441px;letter-spacing:-0.053px;word-spacing:0;">1-2 sin bearer <span class="g gx">6750</span></div>
<div class="txt b" style="left:3.2px;top:473px;">2</div>
<div class="txt " style="left:34.9px;top:473px;letter-spacing:-0.135px;word-spacing:0;">world, redeemed <span class="g gx">4028</span></div>
<div class="txt " style="left:34.9px;top:492px;letter-spacing:-0.349px;word-spacing:0;">atonement in NT <span class="g gx">6617</span></div>
<div class="txt " style="left:34.9px;top:511px;letter-spacing:-0.156px;word-spacing:0;">expiation <span class="g gx">6648</span></div>
<div class="txt " style="left:34.9px;top:530px;letter-spacing:-0.035px;word-spacing:0;">propitiation <span class="g gx">6712</span></div>
<div class="txt " style="left:36.2px;top:562px;letter-spacing:-0.076px;word-spacing:0;"><b>The world</b></div>
<div class="txt " style="left:35px;top:583px;letter-spacing:-0.205px;word-spacing:0;">The phrase <i>the world</i> is used in a number of senses</div>
<div class="txt " style="left:35px;top:602px;letter-spacing:-0.260px;word-spacing:0;">in Scripture. In the first place, it can refer to the</div>
<div class="txt " style="left:35px;top:621px;letter-spacing:-0.190px;word-spacing:0;">created world in general as the good creation of</div>
<div class="txt " style="left:35px;top:640px;letter-spacing:-0.262px;word-spacing:0;">God. In this sense the world is seen as a witness to</div>
<div class="txt " style="left:35px;top:659px;letter-spacing:-0.213px;word-spacing:0;">God’s wisdom and righteousness as shown in the</div>
<div class="txt " style="left:35px;top:678px;letter-spacing:-0.230px;word-spacing:0;">ordering of the heavens and the provision made for</div>
<div class="txt " style="left:35px;top:697px;letter-spacing:-0.185px;word-spacing:0;">living creatures on earth. A realization of the</div>
<div class="txt " style="left:35px;top:716px;letter-spacing:-0.194px;word-spacing:0;">greatness of the created world leads to a sense of</div>
<div class="txt " style="left:35px;top:735px;letter-spacing:-0.160px;word-spacing:0;">awe concerning God himself as the Creator of this</div>
<div class="txt " style="left:35px;top:754px;letter-spacing:-0.207px;word-spacing:0;">world. Second, the expression is used in a more</div>
<div class="txt " style="left:35px;top:773px;letter-spacing:-0.223px;word-spacing:0;">negative sense to refer to the world in rebellion</div>
</div>
<div class="abs" style="left:1251px;top:213px;width:423px;height:782px;background:#fff;border:1px solid #8fa6be;border-top-color:#9fb0c4"></div>
<div class="abs" style="left:1251px;top:158px;width:379px;height:56px;border:1px solid #8fa6be;border-right:0;border-radius:5px 0 0 0;background:linear-gradient(to right,#d8e1f3 0,#e4eaf7 45%,#f8f9fb 100%)"></div>
<div class="abs" style="left:1624px;top:158px;width:7px;height:29px;border:1px solid #8fa6be;border-left:0;border-bottom:0;border-radius:0 3px 0 0;background:#f8f9fb"></div>
<div class="abs" style="left:1630px;top:185px;width:44px;height:29px;border:1px solid #8fa6be;border-left:0;border-radius:0 3px 0 0;background:linear-gradient(to right,#f8f9fb,#f9fafc)"></div>
<span style="position:absolute;left:1258.13px;top:164.84px;font:normal normal 12px 'Liberation Sans';line-height:16px;letter-spacing:0.108px;color:#000;white-space:pre;">TOPICAL message 12:49:05 AM</span>
<svg class="abs" style="left:1258.5px;top:198px" width="8" height="5" viewBox="0 0 8 5"><path d="M0 0 H8 L4 4.6Z" fill="#000"/></svg>
<span style="position:absolute;left:1267.95px;top:194.03px;font:normal bold 10px 'Liberation Sans';line-height:13px;letter-spacing:0.033px;color:#000;white-space:pre;">Angel of the Lord</span>
<span style="position:absolute;left:1362.63px;top:194.03px;font:normal bold 10px 'Liberation Sans';line-height:13px;letter-spacing:0.128px;color:#000;white-space:pre;">Hit: 1 of 13</span>
<svg class="abs" style="left:1653px;top:192px" width="16" height="16" viewBox="0 0 16 16"><defs><radialGradient id="grx1661" cx=".4" cy=".3" r=".8"><stop offset="0" stop-color="#ec7b7b"/><stop offset="1" stop-color="#cf3a42"/></radialGradient></defs><circle cx="8" cy="8" r="7" fill="url(#grx1661)" stroke="#c23a40" stroke-width=".6"/><path d="M5.2 5.2 L10.8 10.8 M10.8 5.2 L5.2 10.8" stroke="#f4f0f0" stroke-width="2.3" stroke-linecap="round"/></svg>
<svg class="abs" style="left:1636px;top:162px" width="16" height="13" viewBox="0 0 16 13"><path d="M1.2 11.6 V1.4 H6.2 L7.6 3.4 H14.4 V11.6 Z" fill="none" stroke="#00007e" stroke-width="1.3"/><path d="M1.2 1 H6.4 L7.6 3 H1.2Z" fill="#00007e"/></svg>
<div class="pane" style="left:1252px;top:214px;width:421px;height:780px">
<div class="txt " style="left:7.2px;top:35px;letter-spacing:0.127px;word-spacing:0;"><b>Anger</b></div>
<div class="txt " style="left:8px;top:71px;letter-spacing:-0.250px;word-spacing:0;">A. Human anger</div>
<div class="txt " style="left:24px;top:94px;letter-spacing:-0.180px;word-spacing:0;">1. Expressed by such people as:</div>
<div class="txt " style="left:40px;top:117px;letter-spacing:0.138px;word-spacing:0;">– Cain</div>
<div class="txt b" style="left:190.8px;top:117px;letter-spacing:-0.141px;word-spacing:0;">Gen 4:5–6</div>
<div class="txt " style="left:40px;top:140px;letter-spacing:-0.029px;word-spacing:0;">– Jacob</div>
<div class="txt b" style="left:190.8px;top:140px;letter-spacing:-0.132px;word-spacing:0;">Gen 30:2</div>
<div class="txt " style="left:40px;top:163px;letter-spacing:-0.048px;word-spacing:0;">– Moses</div>
<div class="txt b" style="left:190.8px;top:163px;letter-spacing:0.078px;word-spacing:0;">Exod 11:8</div>
<div class="txt " style="left:40px;top:186px;letter-spacing:0.019px;word-spacing:0;">– Saul</div>
<div class="txt b" style="left:190.8px;top:186px;letter-spacing:0.071px;word-spacing:0;">1Sa 20:30</div>
<div class="txt " style="left:40px;top:209px;letter-spacing:0.097px;word-spacing:0;">– David</div>
<div class="txt b" style="left:190.8px;top:209px;letter-spacing:0.040px;word-spacing:0;">2Sa 6:8</div>
<div class="txt " style="left:40px;top:232px;letter-spacing:-0.170px;word-spacing:0;">– Naaman</div>
<div class="txt b" style="left:190.8px;top:232px;letter-spacing:0.207px;word-spacing:0;">2Ki 5:11</div>
<div class="txt " style="left:40px;top:255px;letter-spacing:-0.138px;word-spacing:0;">– Nehemiah</div>
<div class="txt b" style="left:190.8px;top:255px;letter-spacing:-0.207px;word-spacing:0;">Neh 5:6</div>
<div class="txt " style="left:40px;top:278px;letter-spacing:-0.200px;word-spacing:0;">– Jonah</div>
<div class="txt b" style="left:190.8px;top:278px;letter-spacing:-0.220px;word-spacing:0;">Jonah 4:1, 9</div>
<div class="txt " style="left:24px;top:301px;letter-spacing:-0.192px;word-spacing:0;">2. Control of our anger</div>
<div class="txt " style="left:40px;top:324px;letter-spacing:-0.219px;word-spacing:0;">– We must</div>
<div class="txt b" style="left:190.8px;top:324px;letter-spacing:0.038px;word-spacing:0;">Ps 37:8</div>
<div class="txt " style="left:56px;top:343px;letter-spacing:-0.149px;word-spacing:0;">refrain from</div>
<div class="txt " style="left:56px;top:362px;letter-spacing:-0.289px;word-spacing:0;">anger</div>
<div class="txt b" style="left:190.8px;top:385px;letter-spacing:-0.183px;word-spacing:0;">Eph 4:31</div>
<div class="txt " style="left:40px;top:408px;letter-spacing:-0.183px;word-spacing:0;">– We must be</div>
<div class="txt b" style="left:190.8px;top:408px;letter-spacing:0.034px;word-spacing:0;">Jas 1:19–20</div>
<div class="txt " style="left:56px;top:427px;letter-spacing:-0.242px;word-spacing:0;">slow to anger</div>
<div class="txt " style="left:40px;top:450px;letter-spacing:-0.219px;word-spacing:0;">– We must</div>
<div class="txt b" style="left:190.8px;top:450px;letter-spacing:0.013px;word-spacing:0;">Prov 16:32</div>
<div class="txt " style="left:56px;top:469px;letter-spacing:-0.200px;word-spacing:0;">keep our</div>
<div class="txt " style="left:56px;top:488px;letter-spacing:0.029px;word-spacing:0;">temper in</div>
<div class="txt " style="left:56px;top:507px;letter-spacing:-0.205px;word-spacing:0;">check</div>
<div class="txt " style="left:40px;top:530px;letter-spacing:-0.351px;word-spacing:0;">– In our anger</div>
<div class="txt b" style="left:190.8px;top:530px;letter-spacing:-0.078px;word-spacing:0;">Ps 4:4</div>
<div class="txt " style="left:56px;top:549px;letter-spacing:-0.415px;word-spacing:0;">we must not</div>
<div class="txt " style="left:56px;top:568px;letter-spacing:0.093px;word-spacing:0;">sin</div>
<div class="txt b" style="left:190.8px;top:591px;letter-spacing:-0.045px;word-spacing:0;">Eph 4:26–27</div>
<div class="txt " style="left:24px;top:614px;letter-spacing:-0.157px;word-spacing:0;">3. Anger puts us</div>
<div class="txt b" style="left:190.8px;top:614px;letter-spacing:-0.073px;word-spacing:0;">Matt 5:21–22</div>
<div class="txt " style="left:40px;top:633px;letter-spacing:-0.149px;word-spacing:0;">in danger of</div>
<div class="txt " style="left:40px;top:652px;letter-spacing:-0.179px;word-spacing:0;">hell</div>
<div class="txt " style="left:24px;top:675px;letter-spacing:-0.289px;word-spacing:0;">4. We must let</div>
<div class="txt b" style="left:190.8px;top:675px;letter-spacing:-0.097px;word-spacing:0;">Ps 94:1</div>
<div class="txt " style="left:40px;top:694px;letter-spacing:-0.157px;word-spacing:0;">God avenge sin</div>
<div class="txt b" style="left:190.8px;top:717px;letter-spacing:-0.101px;word-spacing:0;">Rom 12:19</div>
<div class="txt b" style="left:190.8px;top:740px;letter-spacing:-0.221px;word-spacing:0;">2Th 1:6–8</div>
<div class="txt " style="left:8px;top:776px;">B. The anger of Jesus</div>
</div>
<div id="status"></div>
<span style="position:absolute;left:0.86px;top:1004.52px;font:normal normal 11.5px 'Liberation Sans';line-height:15px;letter-spacing:-0.361px;color:#000;white-space:pre;">For Help, press F1</span>
<div class="abs" style="left:511px;top:1004px;width:1px;height:15px;background:#8e937b"></div><div class="abs" style="left:512px;top:1004px;width:1px;height:15px;background:#f4f5ee"></div>
<span style="position:absolute;left:514.97px;top:1004.52px;font:normal normal 11.5px 'Liberation Sans';line-height:15px;letter-spacing:-0.328px;color:#000;white-space:pre;">| The Holy Bible, New International Version®, Page NA</span>
<div class="abs" style="left:1589px;top:1004px;width:1px;height:15px;background:#8e937b"></div><div class="abs" style="left:1590px;top:1004px;width:1px;height:15px;background:#f4f5ee"></div>
<div class="abs" style="left:1617px;top:1004px;width:1px;height:15px;background:#8e937b"></div><div class="abs" style="left:1618px;top:1004px;width:1px;height:15px;background:#f4f5ee"></div>
<div class="abs" style="left:1647px;top:1004px;width:1px;height:15px;background:#8e937b"></div><div class="abs" style="left:1648px;top:1004px;width:1px;height:15px;background:#f4f5ee"></div>
<span style="position:absolute;left:1593.42px;top:1004.52px;font:normal normal 11.5px 'Liberation Sans';line-height:15px;letter-spacing:-1.733px;color:#9b9f8c;white-space:pre;">CAP</span>
<span style="position:absolute;left:1620.56px;top:1004.52px;font:normal normal 11.5px 'Liberation Sans';line-height:15px;letter-spacing:-1.258px;color:#000;white-space:pre;">NUM</span>
<span style="position:absolute;left:1650.88px;top:1004.52px;font:normal normal 11.5px 'Liberation Sans';line-height:15px;letter-spacing:-1.728px;color:#9b9f8c;white-space:pre;">SCRL</span>
<div id="task"></div>
<div class="abs" style="left:0;top:1020px;width:93px;height:4px;border-radius:0 4px 0 0;background:linear-gradient(to bottom,#4f7f3c 0,#7fae62 1.5px,#a3c88a 4px)"></div>
<div class="abs" style="left:1570px;top:1020px;width:110px;height:4px;background:linear-gradient(to bottom,#c9b78a 0,#fbeecb 1.5px,#fdf3d6 4px)"></div>
</body></html>
